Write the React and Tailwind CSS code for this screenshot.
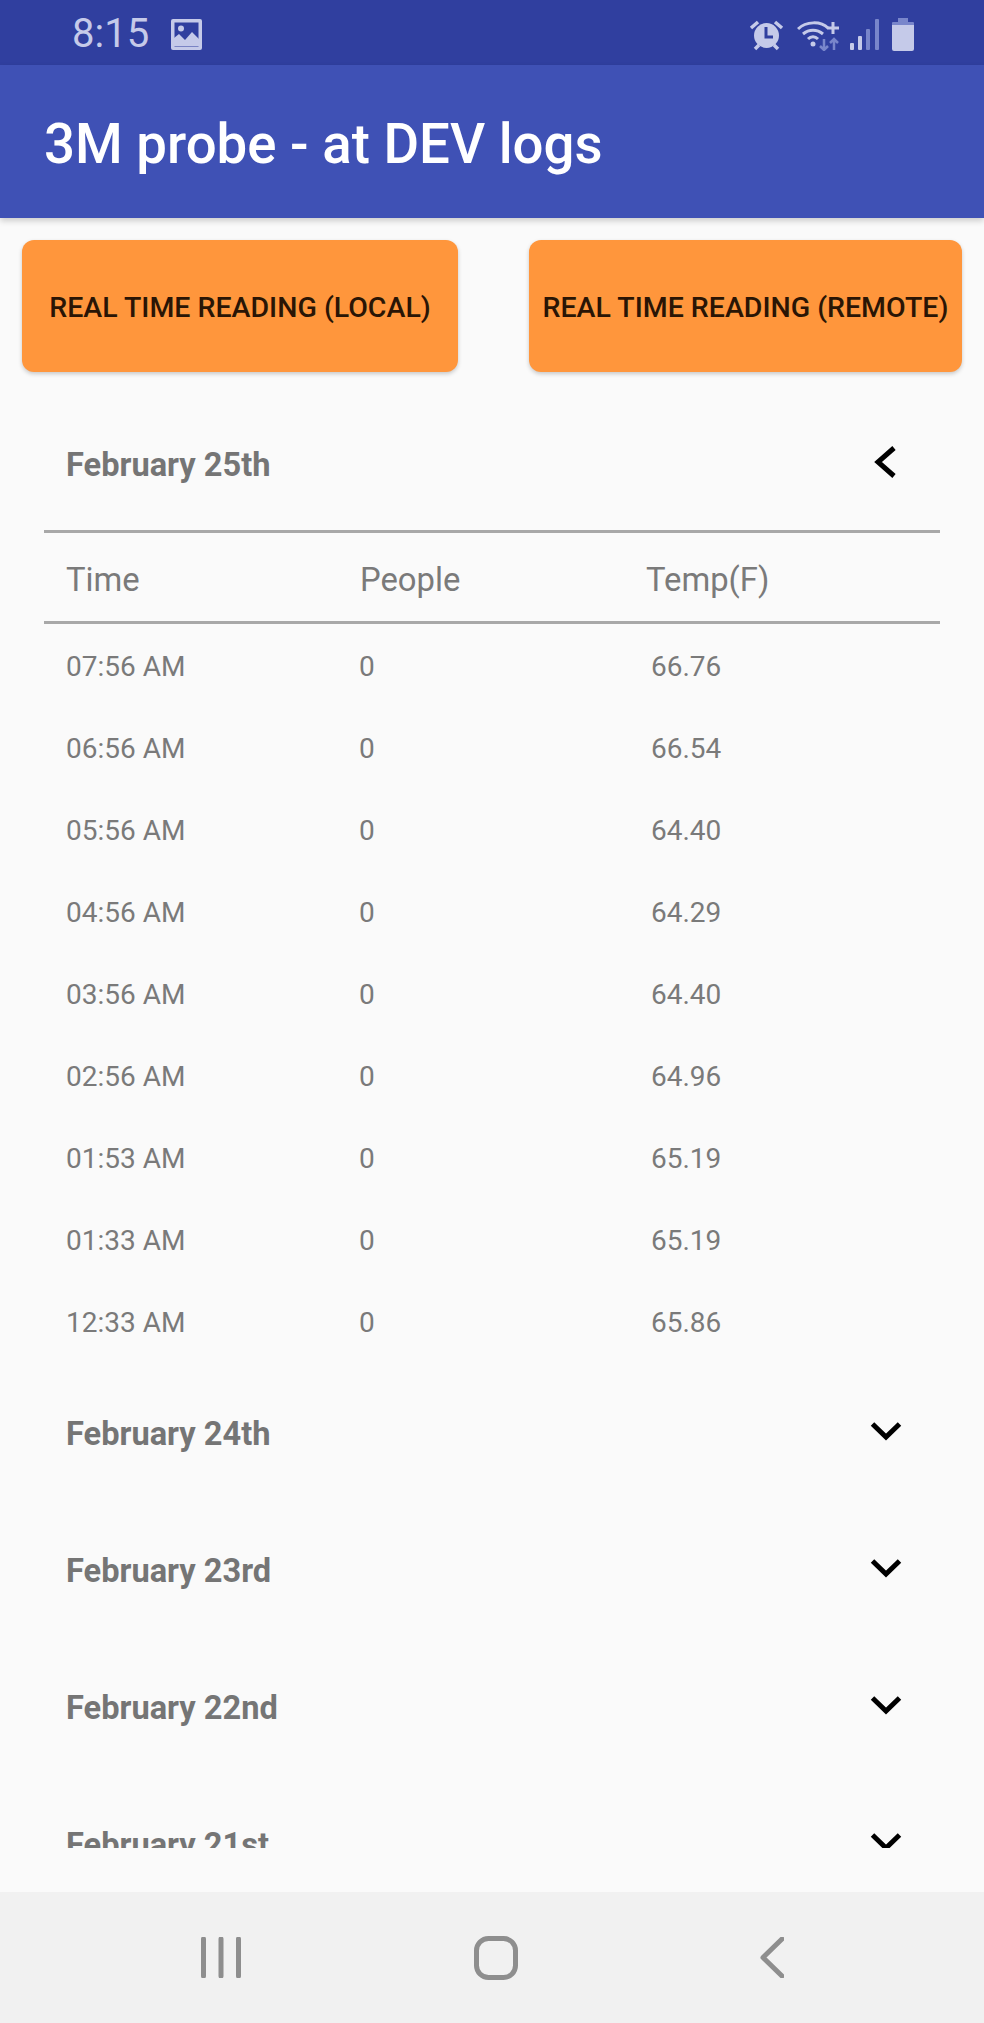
const logs = [
  ['07:56 AM', '0', '66.76'],
  ['06:56 AM', '0', '66.54'],
  ['05:56 AM', '0', '64.40'],
  ['04:56 AM', '0', '64.29'],
  ['03:56 AM', '0', '64.40'],
  ['02:56 AM', '0', '64.96'],
  ['01:53 AM', '0', '65.19'],
  ['01:33 AM', '0', '65.19'],
  ['12:33 AM', '0', '65.86'],
]

const collapsedDays = ['February 24th', 'February 23rd', 'February 22nd', 'February 21st']

function ImageIcon() {
  return (
    <svg width="31" height="31" viewBox="0 0 31 31">
      <rect width="31" height="31" rx="2" fill="#c5cae9" />
      <rect x="3.5" y="3.5" width="24" height="24" fill="#303f9f" />
      <circle cx="10" cy="9.5" r="3" fill="#c5cae9" />
      <path d="M3 27V19l5-4 6 6 7-8 7 7v7z" fill="#c5cae9" />
    </svg>
  )
}

function AlarmIcon() {
  return (
    <svg width="35" height="33" viewBox="0 0 35 33">
      <circle cx="17.5" cy="17.5" r="12.5" fill="#c5cae9" />
      <path d="M2 10l7-6M33 10l-7-6M6 31l4-4M29 31l-4-4" stroke="#c5cae9" strokeWidth="3.5" fill="none" />
      <path d="M17 9v10h7" stroke="#303f9f" strokeWidth="3" fill="none" />
    </svg>
  )
}

function WifiIcon() {
  return (
    <svg width="44" height="33" viewBox="0 0 44 33">
      <path d="M1 11C9 3 24 3 31 10" stroke="#c5cae9" strokeWidth="3" fill="none" />
      <path d="M6 16c6-5 14-5 20 0" stroke="#c5cae9" strokeWidth="3" fill="none" />
      <path d="M11 21c3-3 7-3 10 0" stroke="#c5cae9" strokeWidth="3" fill="none" />
      <circle cx="16" cy="26" r="2.5" fill="#c5cae9" />
      <path d="M30 10h12M36 4v12" stroke="#c5cae9" strokeWidth="3" fill="none" />
      <path d="M27 21v11M23 28l4 4 4-4" stroke="#7986cb" strokeWidth="2.5" fill="none" />
      <path d="M37 32V21M33 25l4-4 4 4" stroke="#7986cb" strokeWidth="2.5" fill="none" />
    </svg>
  )
}

function SignalIcon() {
  return (
    <svg width="29" height="31" viewBox="0 0 29 31">
      <rect x="0" y="24" width="4" height="7" rx="1" fill="#c5cae9" />
      <rect x="8" y="17" width="4" height="14" rx="1" fill="#c5cae9" />
      <rect x="16" y="10" width="4" height="21" rx="1" fill="#7986cb" />
      <rect x="25" y="0" width="4" height="31" rx="1" fill="#7986cb" />
    </svg>
  )
}

function BatteryIcon() {
  return (
    <svg width="22" height="33" viewBox="0 0 22 33">
      <path d="M6 0h10v4h5a1 1 0 0 1 1 1v5H0V5a1 1 0 0 1 1-1h5z" fill="#7986cb" />
      <path d="M0 7h22v24a2 2 0 0 1-2 2H2a2 2 0 0 1-2-2z" fill="#c5cae9" />
    </svg>
  )
}

function Chevron({ open }) {
  return (
    <svg width="34" height="34" viewBox="0 0 34 34" className="mb-[7px] shrink-0">
      {open ? (
        <path d="M25 3 9 17l16 14" stroke="#000" strokeWidth="5" fill="none" />
      ) : (
        <path d="M3.5 10 17 23 30.5 10" stroke="#000" strokeWidth="5" fill="none" />
      )}
    </svg>
  )
}

function DayHeader({ label, open }) {
  return (
    <div className={`flex items-center justify-between pl-[66px] pr-[81px] ${open ? 'h-[134px] pt-[5px]' : 'h-[137px] pt-[3px]'}`}>
      <span className="text-[32.6px] font-bold text-[#757575]">{label}</span>
      <Chevron open={open} />
    </div>
  )
}

export default function App() {
  return (
    <div className="flex h-[2023px] w-[984px] flex-col overflow-hidden bg-[#fafafa] font-['Roboto',sans-serif]">
      {/* Status bar */}
      <div className="flex h-[65px] shrink-0 items-center bg-[#303f9f] pl-[72px] pr-[70px] pt-[3px]">
        <span className="text-[40px] leading-none text-[#c5cae9]">8:15</span>
        <div className="ml-[22px]">
          <ImageIcon />
        </div>
        <div className="ml-auto flex items-center gap-[9px]">
          <AlarmIcon />
          <div className="ml-[4px]">
            <WifiIcon />
          </div>
          <SignalIcon />
          <div className="ml-[4px]">
            <BatteryIcon />
          </div>
        </div>
      </div>

      {/* App bar */}
      <div className="relative z-10 flex h-[153px] shrink-0 items-center bg-[#3f51b5] pl-[44px] pt-[6px] shadow-[0_3px_6px_rgba(0,0,0,0.18)]">
        <h1 className="text-[54.6px] font-medium text-white">3M probe - at DEV logs</h1>
      </div>

      {/* Buttons */}
      <div className="flex shrink-0 justify-between px-[22px] pt-[22px]">
        <button className="h-[132px] w-[436px] rounded-[12px] bg-[#ff963c] pt-[5px] text-[28.5px] font-medium text-[#2a1505] shadow-[0_2px_4px_rgba(0,0,0,0.2)]">
          REAL TIME READING (LOCAL)
        </button>
        <button className="h-[132px] w-[433px] rounded-[12px] bg-[#ff963c] pt-[5px] text-[28.5px] font-medium text-[#2a1505] shadow-[0_2px_4px_rgba(0,0,0,0.2)]">
          REAL TIME READING (REMOTE)
        </button>
      </div>

      {/* Log list, cut off by the scroll area */}
      <div className="mb-[44px] min-h-0 flex-1 overflow-hidden pt-[24px]">
        <DayHeader label="February 25th" open />
        <div className="mx-[44px] flex h-[94px] items-center border-y-[3px] border-[#a8a8a8] pl-[22px] pt-[7px] text-[32.8px] text-[#7a7a7a]">
          <span className="w-[294px]">Time</span>
          <span className="w-[286px]">People</span>
          <span>Temp(F)</span>
        </div>
        <div className="pt-[2px]">
          {logs.map(([time, people, temp]) => (
            <div key={time} className="flex h-[82px] items-center pl-[66px] text-[28px] text-[#7a7a7a]">
              <span className="w-[293px]">{time}</span>
              <span className="w-[292px]">{people}</span>
              <span>{temp}</span>
            </div>
          ))}
        </div>
        {collapsedDays.map((day) => (
          <DayHeader key={day} label={day} />
        ))}
      </div>

      {/* Nav bar */}
      <div className="flex h-[131px] shrink-0 items-center justify-between bg-[#f1f1f1] pl-[201px] pr-[200px]">
        <svg width="40" height="41" viewBox="0 0 40 41">
          <path d="M2.5 2v37M20 2v37M37.5 2v37" stroke="#8e8e8e" strokeWidth="5" strokeLinecap="round" fill="none" />
        </svg>
        <svg width="44" height="44" viewBox="0 0 44 44" className="mr-[9px]">
          <rect x="2.5" y="2.5" width="39" height="39" rx="12" stroke="#8e8e8e" strokeWidth="5" fill="none" />
        </svg>
        <svg width="24" height="41" viewBox="0 0 24 41">
          <path d="M22 2 3 20.5 22 39" stroke="#8e8e8e" strokeWidth="5" strokeLinecap="round" strokeLinejoin="round" fill="none" />
        </svg>
      </div>
    </div>
  )
}
